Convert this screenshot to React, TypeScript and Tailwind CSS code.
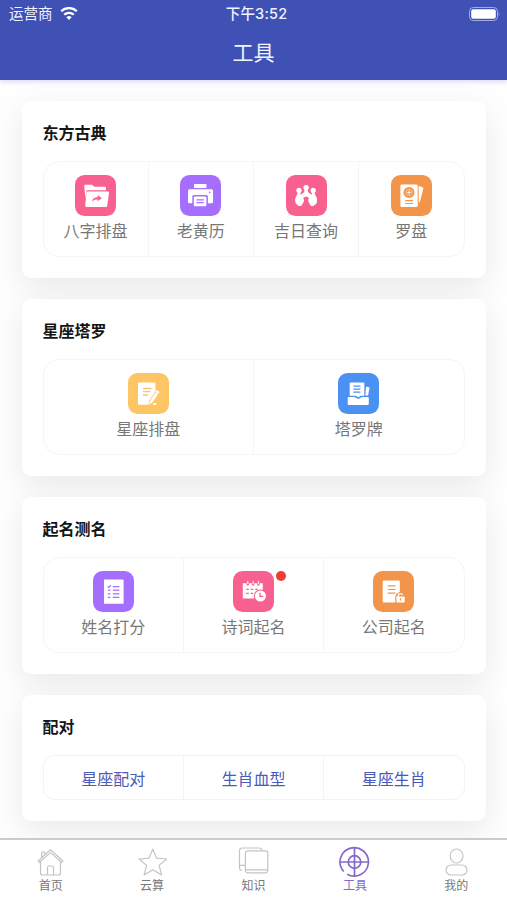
import React from "react";

type Tool = {
  label: string;
  color?: string;
  icon?: React.ReactNode;
  badge?: boolean;
};

type Section = {
  title: string;
  tools: Tool[];
};

const FolderIcon = (
  <>
    <path
      fill="#fff"
      d="M9.2 11a1.2 1.2 0 0 1 1.2-1.2h6.8l2 2h10.6A1.2 1.2 0 0 1 31 13v2.2H11.6l-1.2 8z"
    />
    <path
      fill="#fff"
      d="M12.4 16.5h20.7a1 1 0 0 1 1 1.1l-1.9 13.2a1.4 1.4 0 0 1-1.4 1.2H11.4a1.2 1.2 0 0 1-1.2-1.3l1.3-13.4a1 1 0 0 1 .9-.8z"
    />
    <path
      fill="#f8608f"
      d="M16.8 26.6c.8-3 2.9-4.4 6-4.6V20l4.1 3.3-4.5 3v-1.9c-2.3 0-3.9.5-5.6 2.2z"
    />
  </>
);

const PrinterIcon = (
  <>
    <rect x="14" y="9" width="12.5" height="4" rx=".8" fill="#fff" />
    <rect x="8" y="14.3" width="25" height="14" rx="1.5" fill="#fff" />
    <rect x="12.3" y="20" width="15.6" height="12.5" rx="1.5" fill="#a56eff" />
    <rect x="13.8" y="21.4" width="12.6" height="9.8" rx="1.2" fill="#fff" />
    <path stroke="#a56eff" strokeWidth="1.2" d="M16.5 24.8h7.3M16.5 27.7h7.3" />
    <circle cx="29.7" cy="17.4" r=".8" fill="#a56eff" />
  </>
);

const PeopleIcon = (
  <g fill="#fff">
    <circle cx="20.1" cy="12.6" r="2.7" />
    <circle cx="13" cy="15.4" r="2.6" />
    <circle cx="27.2" cy="15.4" r="2.6" />
    <path d="M11.8 17.5h2.4l.5 2.2 2.6 3.2c.9 1.5.9 3.5 0 4.7L15.2 31h-2.4L10 28.700c-1.300-2.500-1.300-5.200.3-7.400z" />
    <path d="M28.4 17.5H26l-.5 2.2-2.6 3.2c-.9 1.5-.9 3.5 0 4.7L25 31h2.4l2.8-2.3c1.300-2.500 1.300-5.200-.3-7.400z" />
    <path d="M18.6 14.800h3l.6 2.400 3.600 2.800-1.200 4-2.600-1.800-1.900-.8-1.900.8-2.600 1.800-1.200-4 3.600-2.800z" />
  </g>
);

const CompassCardIcon = (
  <>
    <path fill="#fff" d="M27.7 11l3.9 1.2a1 1 0 0 1 .7 1.2L29 27l-1.3.5z" />
    <rect x="9.4" y="9.5" width="17.3" height="22.5" rx="1.3" fill="#fff" />
    <circle cx="18" cy="17.4" r="5.5" fill="#f2954b" />
    <circle cx="18" cy="17.4" r="3.3" fill="none" stroke="#fff" strokeWidth=".4" />
    <path stroke="#fff" strokeWidth=".9" d="M18 15.400v4M16 17.400h4" />
    <path stroke="#f2954b" strokeWidth="1.2" d="M14.200 25.600h7.800M14.200 28.500h7.800" />
  </>
);

const NoteIcon = (
  <>
    <path
      fill="#fff"
      d="M11 9.5h15.300a1.200 1.200 0 0 1 1.200 1.200V18l-6.300 9.400-.7 4.400H11a1 1 0 0 1-1-1V10.500a1 1 0 0 1 1-1z"
    />
    <path stroke="#fdc563" strokeWidth="1.3" d="M15 15.500h8.500M15 18.700h7.500M15 22h5" />
    <path fill="#fff" d="M28.800 17l2.800 1.900-7.400 10.900-3.200 2 .9-3.900z" />
    <path stroke="#fdc563" strokeWidth=".7" d="M27.200 19.200l2.800 1.900" />
    <path stroke="#fff" strokeWidth="1.800" d="M25.200 30.900h3.200" />
  </>
);

const TrayIcon = (
  <>
    <path fill="#fff" d="M28 13.5l3.600 1-1.500 8h-2.700z" />
    <path fill="#fff" d="M12.600 9.500h12.700a1 1 0 0 1 1 1v12.300h-3.600l-2.300 1.400-2.700-1.400h-6V10.500a1 1 0 0 1 .9-1z" />
    <path stroke="#4b91f3" strokeWidth="1.2" d="M15.400 13.200h7M15.400 16.200h7M15.400 19.200h7" />
    <path
      fill="#fff"
      d="M10.700 24h5.800l3.800 1.900 3.800-1.900h5.700a1 1 0 0 1 1 1v5.800a1.200 1.200 0 0 1-1.200 1.200H10.900a1.200 1.200 0 0 1-1.200-1.200V25a1 1 0 0 1 1-1z"
    />
  </>
);

const ChecklistIcon = (
  <>
    <rect x="11" y="8.5" width="19.6" height="24.3" rx=".6" fill="#fff" />
    <path
      stroke="#a56eff"
      strokeWidth="1.2"
      fill="none"
      d="M19.8 15.6h6.600M19.800 19.200h6.600M19.800 22.800h6.600M19.800 26.400h6.600M14.800 19.200h2.600M14.800 22.800h2.600M14.800 26.400h2.600M14.600 15.400l1.200 1.100 2.300-2.400"
    />
  </>
);

const CalendarIcon = (
  <>
    <path
      fill="#fff"
      d="M9.800 12.200h3.800v1.300a1.200 1.200 0 0 0 2.400 0v-1.300h2.900v1.300a1.200 1.200 0 0 0 2.400 0v-1.300h2.900v1.300a1.200 1.200 0 0 0 2.400 0v-1.300h3.200v15.300h-20z"
    />
    <path stroke="#fff" strokeWidth="1" d="M14.800 9.800v3.400M20.100 9.800v3.400M25.400 9.800v3.400" />
    <path
      stroke="#f8608f"
      strokeWidth="1.3"
      d="M13.200 18.300h2.600M17.700 18.300h2.600M13.200 22.300h2.600M17.700 22.300h2.600M22.200 18.300h2.600"
    />
    <circle cx="27.4" cy="25" r="6.6" fill="#f8608f" />
    <circle cx="27.4" cy="25" r="5.5" fill="#fff" />
    <path stroke="#f8608f" strokeWidth="1.3" fill="none" d="M27 21.800v3.600h3.200" />
  </>
);

const LicenseIcon = (
  <>
    <path
      fill="#fff"
      d="M10.700 9.500h15.100a1 1 0 0 1 1 1v10.300l-3.300 2-1.300 3.200v5.500H10.700a1 1 0 0 1-1-1v-20a1 1 0 0 1 1-1z"
    />
    <path stroke="#f2954b" strokeWidth="1.2" d="M14.700 14.900h7.800M14.700 18.500h7.800M14.700 22.100h7.800" />
    <path stroke="#fff" strokeWidth="1.3" fill="none" d="M25.300 26v-1.300a2.200 2.200 0 0 1 4.200-.7" />
    <rect x="23.4" y="25.5" width="8.3" height="6" rx=".8" fill="#fff" />
    <path stroke="#f2954b" strokeWidth="1.2" d="M27.500 27.200v2.400" />
  </>
);

const sections: Section[] = [
  {
    title: "东方古典",
    tools: [
      { label: "八字排盘", color: "#f8608f", icon: FolderIcon },
      { label: "老黄历", color: "#a56eff", icon: PrinterIcon },
      { label: "吉日查询", color: "#f8608f", icon: PeopleIcon },
      { label: "罗盘", color: "#f2954b", icon: CompassCardIcon },
    ],
  },
  {
    title: "星座塔罗",
    tools: [
      { label: "星座排盘", color: "#fdc563", icon: NoteIcon },
      { label: "塔罗牌", color: "#4b91f3", icon: TrayIcon },
    ],
  },
  {
    title: "起名测名",
    tools: [
      { label: "姓名打分", color: "#a56eff", icon: ChecklistIcon },
      { label: "诗词起名", color: "#f8608f", icon: CalendarIcon, badge: true },
      { label: "公司起名", color: "#f2954b", icon: LicenseIcon },
    ],
  },
  {
    title: "配对",
    tools: [{ label: "星座配对" }, { label: "生肖血型" }, { label: "星座生肖" }],
  },
];

const tabs = [
  {
    label: "首页",
    icon: (
      <path d="M4 16L16.500 4.800 29 16l-1.200 1.500L16.500 7.600 5.200 17.500zM6.500 16.500V28a2 2 0 0 0 2 2h16a2 2 0 0 0 2-2V16.500M13.500 30v-7.500A1.500 1.500 0 0 1 15 21h3a1.500 1.500 0 0 1 1.500 1.500V30M7.800 12.500V7h3v2.800" />
    ),
  },
  {
    label: "云算",
    icon: <path d="M16.800 4.200l3.900 9 10 .8-7.600 6.400 2.600 9.500-8.900-5.200-8.700 5.200 2.500-9.500L3 14l9.900-.8z" />,
  },
  {
    label: "知识",
    icon: (
      <>
        <rect x="8.4" y="5.800" width="22.400" height="22" rx="2.500" />
        <path d="M8.400 24.800h22.400M4.800 25.500a2.500 2.500 0 0 1-2.300-2.500V5.500A2.500 2.500 0 0 1 5 3h17.300a2.500 2.500 0 0 1 2.500 2.500M2.500 20.300H8" />
      </>
    ),
  },
  {
    label: "工具",
    active: true,
    icon: (
      <>
        <path d="M9.200 29.200A14.200 14.200 0 1 0 5.800 26.500" strokeDasharray="0 0" />
        <circle cx="16.500" cy="17" r="6.300" />
        <path d="M16.500 2.800v28.400M2.300 17h28.400" />
      </>
    ),
  },
  {
    label: "我的",
    icon: (
      <>
        <ellipse cx="16.600" cy="11" rx="6.400" ry="7" />
        <rect x="6" y="20" width="21" height="10" rx="5" />
      </>
    ),
  },
];

function StatusBar() {
  return (
    <div className="grid h-7 grid-cols-3 items-center pl-[9px] pr-[7px] text-[14.5px] leading-none">
      <div className="flex items-center gap-[7px]">
        <span>运营商</span>
        <svg width="18" height="14" viewBox="0 0 18 14" fill="none" stroke="#fff" strokeWidth="2.3">
          <path d="M1.200 5.300a11 11 0 0 1 15.600 0" transform="translate(0 -1)" />
          <path d="M4.200 8.500a6.800 6.800 0 0 1 9.600 0" transform="translate(0 -.700)" />
          <path d="M9 13l-2.600-2.800a3.700 3.700 0 0 1 5.200 0z" fill="#fff" stroke="none" />
        </svg>
      </div>
      <span className="whitespace-nowrap pl-1 text-center font-medium tracking-[0.2px]">
        下午3:52
      </span>
      <svg className="justify-self-end" width="31" height="15" viewBox="0 0 31 15">
        <rect x=".5" y=".5" width="28" height="13" rx="3.8" fill="none" stroke="#a3abde" />
        <rect x="2.200" y="2.200" width="24.600" height="9.600" rx="2" fill="#fff" />
        <path d="M29.600 5q1.500 2 0 4z" fill="#a3abde" />
      </svg>
    </div>
  );
}

function ToolCell({ tool }: { tool: Tool }) {
  if (!tool.icon) {
    return (
      <div className="flex flex-1 items-center justify-center pt-0.5 text-base leading-5 text-[#4a5ab8]">
        {tool.label}
      </div>
    );
  }

  return (
    <div className="flex flex-1 flex-col items-center pt-[13px]">
      <div className="relative">
        <svg width="41" height="41" viewBox="0 0 41 41">
          <rect width="41" height="41" rx="9.5" fill={tool.color} />
          {tool.icon}
        </svg>
        {tool.badge && (
          <span className="absolute -right-3 top-0 size-2.5 rounded-full bg-[#f03e30]" />
        )}
      </div>
      <span className="mt-[5px] text-base leading-5 text-[#777]">{tool.label}</span>
    </div>
  );
}

function SectionCard({ section }: { section: Section }) {
  const compact = !section.tools[0].icon;

  return (
    <section className="rounded-[9px] bg-white px-[21px] pb-[21px] shadow-[0_10px_32px_rgba(0,0,0,0.085)]">
      <h2 className="flex h-[60px] items-center pt-1 text-base font-bold text-[#151515]">
        {section.title}
      </h2>
      <div
        className={
          compact
            ? "flex h-[45px] divide-x divide-[#f3f3f3] rounded-xl border border-[#f3f3f3]"
            : "flex h-24 divide-x divide-[#f5f5f5] rounded-2xl border border-[#f5f5f5]"
        }
      >
        {section.tools.map((tool) => (
          <ToolCell key={tool.label} tool={tool} />
        ))}
      </div>
    </section>
  );
}

export default function App() {
  return (
    <div className="flex h-[900px] w-[507px] flex-col overflow-hidden bg-[#fefefe] font-['Inter','Noto_Sans_CJK_SC',sans-serif]">
      {/* Header */}
      <header className="z-10 h-20 shrink-0 bg-[#3f51b5] text-[#f1f3ff] shadow-[0_2px_5px_rgba(63,81,220,0.2)]">
        <StatusBar />
        <h1 className="pt-[9px] text-center text-[21px] leading-8">工具</h1>
      </header>

      {/* Tool sections */}
      <main className="flex min-h-0 flex-1 flex-col gap-[21px] overflow-hidden px-[21.5px] pt-[21px]">
        {sections.map((section) => (
          <SectionCard key={section.title} section={section} />
        ))}
      </main>

      {/* Tab bar */}
      <nav className="flex h-[62px] shrink-0 border-t-2 border-[#cbcbcb] bg-white">
        {tabs.map((tab) => (
          <div
            key={tab.label}
            className={
              tab.active
                ? "flex flex-1 flex-col items-center pt-[5px] text-[#8468cc]"
                : "flex flex-1 flex-col items-center pt-[5px] text-[#777]"
            }
          >
            <svg
              width="33"
              height="33"
              viewBox="0 0 33 33"
              fill="none"
              stroke={tab.active ? "#8468cc" : "#c4c4c4"}
              strokeWidth={tab.active ? 1.7 : 1.2}
              strokeLinejoin="round"
            >
              {tab.icon}
            </svg>
            <span className="text-xs leading-4">{tab.label}</span>
          </div>
        ))}
      </nav>
    </div>
  );
}
